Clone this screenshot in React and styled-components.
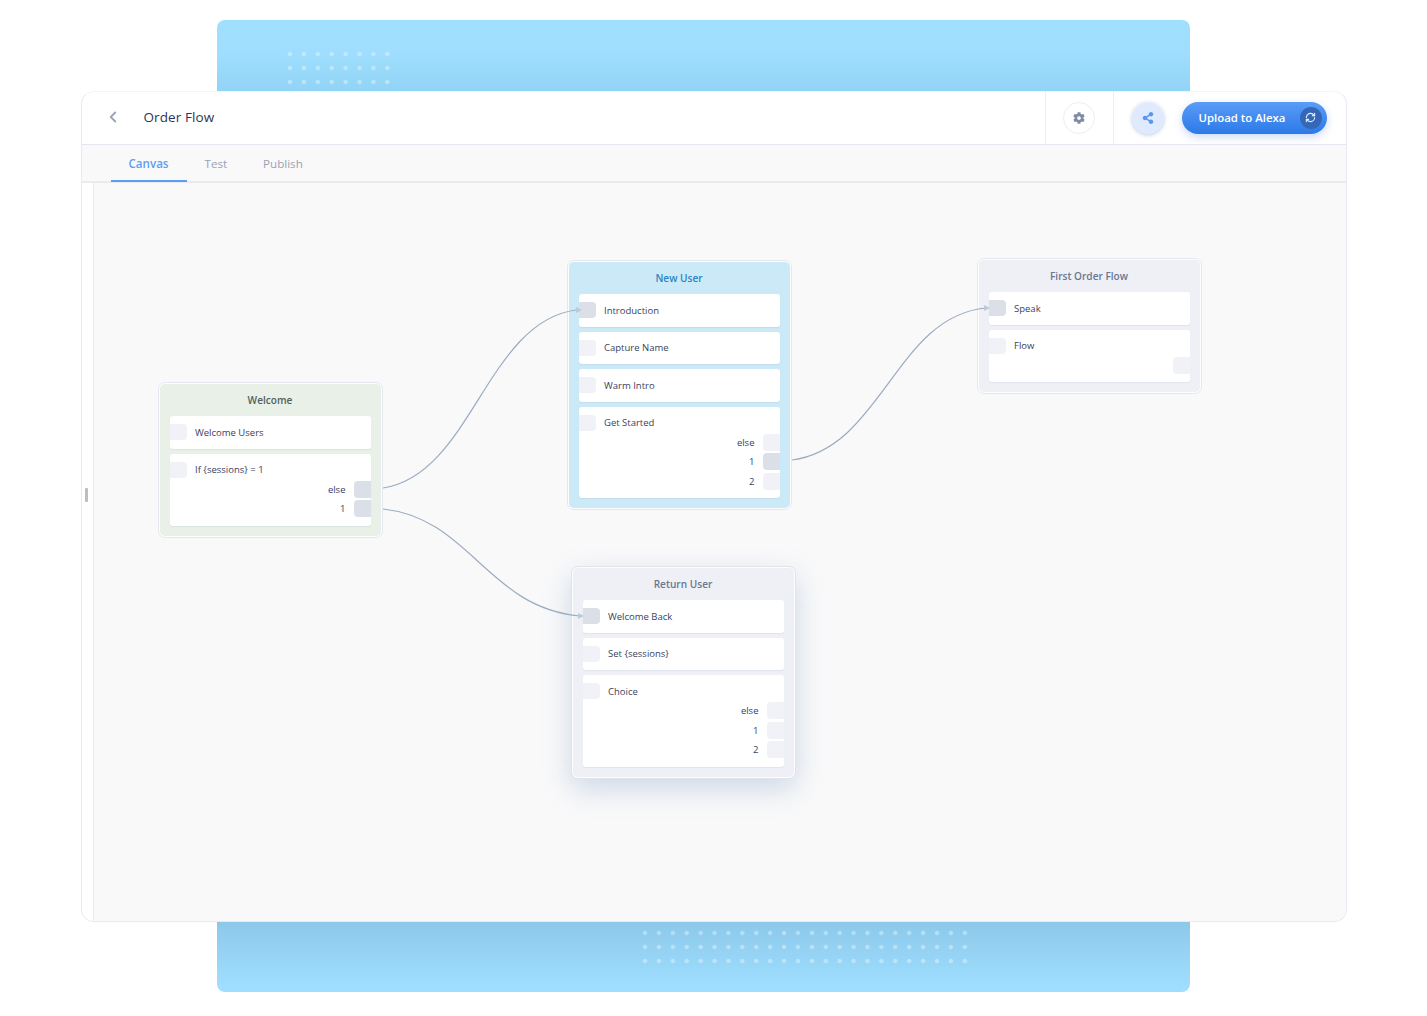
import React from 'react';
import styled, { createGlobalStyle } from 'styled-components';
import { ChevronLeft, RefreshCw } from 'lucide-react';
import { FaCog, FaShareAlt } from 'react-icons/fa';

const CANVAS_X = 94;
const CANVAS_Y = 183;

const GlobalStyle = createGlobalStyle`
  html, body { margin: 0; padding: 0; background: #fff; }
  body { font-family: "Open Sans", "Noto Sans", sans-serif; }
  * { box-sizing: border-box; }
`;

const Page = styled.div`
  width: 1427px;
  height: 1016px;
  padding-top: 20px;
  display: flex;
  flex-direction: column;
  align-items: center;
  overflow: hidden;
`;

const Banner = styled.div`
  width: 973px;
  height: ${p => p.$h}px;
  flex: none;
  margin-right: 20px;
  background: ${p => p.$bottom
    ? 'linear-gradient(180deg, #8cc8ea 0%, #9fdefe 90%)'
    : 'linear-gradient(180deg, #a0e0ff 0%, #9fdefe 45%, #92d4f6 100%)'};
  border-radius: ${p => p.$bottom ? '0 0 8px 8px' : '8px 8px 0 0'};
  padding: ${p => p.$pad};
`;

const DotField = styled.div`
  width: ${p => p.$cols * 13.92}px;
  height: 42px;
  background-image: radial-gradient(circle at 7px 7px, rgba(255,255,255,.36) 1.6px, transparent 2.7px);
  background-size: 13.92px 14px;
`;

const Window = styled.div`
  width: 1266px;
  height: 831px;
  flex: none;
  display: flex;
  flex-direction: column;
  background: #fff;
  border: 1px solid #e7e9f3;
  border-top-color: #f3f4f7;
  border-radius: 13px;
  overflow: hidden;
`;

const Header = styled.header`
  height: 53px;
  flex: none;
  display: flex;
  align-items: center;
  border-bottom: 1px solid #e6e8ef;
`;

const BackBtn = styled.div`
  width: 62px;
  padding: 0 0 2px 22px;
  display: flex;
  color: #9aa4b4;
`;

const Title = styled.div`
  flex: 1;
  padding-bottom: 2px;
  font-size: 13.5px;
  color: #2d3553;
  letter-spacing: .1px;
`;

const HeaderCell = styled.div`
  height: 100%;
  width: 68px;
  display: flex;
  align-items: center;
  justify-content: center;
  border-left: 1px solid #eceef3;
`;

const RoundBtn = styled.div`
  width: 32px;
  height: 32px;
  border-radius: 50%;
  display: flex;
  align-items: center;
  justify-content: center;
  font-size: 12px;
  background: ${p => p.$active ? '#dfeaff' : '#fff'};
  color: ${p => p.$active ? '#5b96ee' : '#7f8da3'};
  border: 1px solid ${p => p.$active ? '#e6edfb' : '#eceef3'};
  box-shadow: ${p => p.$active ? '0 1px 4px rgba(90,130,190,.4)' : 'none'};
`;

const ShareCell = styled.div`
  height: 100%;
  width: 233px;
  padding: 0 19px 0 18px;
  display: flex;
  align-items: center;
  gap: 18px;
  border-left: 1px solid #eceef3;
`;

const UploadBtn = styled.div`
  width: 145px;
  height: 32px;
  flex: none;
  border-radius: 16px;
  padding: 0 5px 1px 17px;
  display: flex;
  align-items: center;
  justify-content: space-between;
  background: linear-gradient(180deg, #5a9cf8 0%, #2c79e8 100%);
  box-shadow: 0 3px 8px rgba(60,120,220,.28);
  color: #fff;
  font-size: 11.4px;
  font-weight: 600;
`;

const UploadIcon = styled.span`
  width: 22px;
  height: 22px;
  border-radius: 50%;
  background: #3468b6;
  display: flex;
  align-items: center;
  justify-content: center;
  color: #e6eefa;
`;

const Tabs = styled.nav`
  height: 38px;
  flex: none;
  padding-left: 29px;
  display: flex;
  background: #f9f9fa;
  border-bottom: 2px solid #e9ebf0;
`;

const Tab = styled.div`
  height: 37px;
  padding: 1px 18px 0;
  display: flex;
  align-items: center;
  font-size: 11.6px;
  font-weight: ${p => p.$active ? 600 : 500};
  color: ${p => p.$active ? '#5f9df5' : '#9aa1b4'};
  border-bottom: 2px solid ${p => p.$active ? '#5f9df5' : 'transparent'};
`;

const Body = styled.div`
  flex: 1;
  display: flex;
  min-height: 0;
`;

const Rail = styled.aside`
  width: 12px;
  flex: none;
  padding: 305px 0 0 3px;
  background: #fff;
  border-right: 1px solid #e8eaf0;
`;

const RailHandle = styled.div`
  width: 3px;
  height: 14px;
  background: #b9bec7;
  border-radius: 1px;
`;

const Canvas = styled.main`
  flex: 1;
  position: relative;
  background: #f9f9fa;
`;

const Wires = styled.svg`
  position: absolute;
  left: 0;
  top: 0;
  width: 100%;
  height: 100%;
  overflow: visible;
  pointer-events: none;
`;

const Node = styled.section`
  position: absolute;
  left: ${p => p.$x - CANVAS_X}px;
  top: ${p => p.$y - CANVAS_Y}px;
  width: 225px;
  padding: 1px;
  background: #fdfdfe;
  border: 1px solid ${p => p.$lift ? '#dfe3ea' : '#e5e8f0'};
  border-radius: 7px;
  box-shadow: ${p => p.$lift ? '0 10px 28px rgba(115,150,190,.32)' : 'none'};
`;

const NodeInner = styled.div`
  padding: 0 10px 10px;
  border-radius: 5px;
  background: ${p => p.$bg};
  display: flex;
  flex-direction: column;
  gap: 5px;
`;

const NodeTitle = styled.div`
  height: 32px;
  margin-bottom: -5px;
  display: flex;
  align-items: center;
  justify-content: center;
  font-size: 10.1px;
  font-weight: 600;
  color: ${p => p.$color};
`;

const Row = styled.div`
  padding: 8.25px 0;
  background: #fff;
  border-radius: 3px;
  box-shadow: 0 1px 1px rgba(130,150,180,.14);
`;

const RowHead = styled.div`
  height: 16px;
  display: flex;
  align-items: center;
  gap: 8.5px;
  font-size: 9.5px;
  color: #3a4260;
`;

const Port = styled.span`
  width: 17px;
  height: ${p => p.$h || 16}px;
  flex: none;
  background: ${p => p.$on ? '#dadfe8' : '#f0f2f7'};
  border-radius: ${p => p.$side === 'right' ? '4px 0 0 4px' : '0 4px 4px 0'};
`;

const Outputs = styled.div`
  margin-top: 3px;
  display: flex;
  flex-direction: column;
  gap: 2.5px;
`;

const Output = styled.div`
  height: 17px;
  display: flex;
  align-items: center;
  justify-content: flex-end;
  gap: 8px;
  font-size: 9.5px;
  color: #3a4260;
`;

const WIRE_COLOR = '#9cadc2';
const ARROW_COLOR = '#bccad8';

// page coordinates, shifted onto the canvas
const wires = [
  { d: 'M383 488 C472 474 486 322 576 310', tip: [576, 310] },
  { d: 'M383 509 C470 518 488 608 580 616', tip: [578, 616] },
  { d: 'M792 460 C882 448 896 316 986 308', tip: [984, 308] },
];

const nodes = [
  {
    title: 'Welcome', x: 158, y: 382, bg: '#e9f0e8', color: '#545f58',
    rows: [
      { label: 'Welcome Users' },
      { label: 'If {sessions} = 1', outputs: [{ label: 'else', on: true }, { label: '1', on: true }] },
    ],
  },
  {
    title: 'New User', x: 567, y: 260, bg: '#cce9f7', color: '#2c84c4',
    rows: [
      { label: 'Introduction', on: true },
      { label: 'Capture Name' },
      { label: 'Warm Intro' },
      { label: 'Get Started', outputs: [{ label: 'else' }, { label: '1', on: true }, { label: '2' }] },
    ],
  },
  {
    title: 'First Order Flow', x: 977, y: 258, bg: '#eef0f6', color: '#6b7690',
    rows: [
      { label: 'Speak', on: true },
      { label: 'Flow', outputs: [{ label: '' }] },
    ],
  },
  {
    title: 'Return User', x: 571, y: 566, bg: '#eef0f6', color: '#6b7690', lift: true,
    rows: [
      { label: 'Welcome Back', on: true },
      { label: 'Set {sessions}' },
      { label: 'Choice', outputs: [{ label: 'else' }, { label: '1' }, { label: '2' }] },
    ],
  },
];

function FlowNode({ node }) {
  return (
    <Node $x={node.x} $y={node.y} $lift={node.lift}>
      <NodeInner $bg={node.bg}>
        <NodeTitle $color={node.color}>{node.title}</NodeTitle>
        {node.rows.map(row => (
          <Row key={row.label}>
            <RowHead>
              <Port $on={row.on} />
              {row.label}
            </RowHead>
            {row.outputs && (
              <Outputs>
                {row.outputs.map(out => (
                  <Output key={out.label}>
                    {out.label}
                    <Port $side="right" $h={17} $on={out.on} />
                  </Output>
                ))}
              </Outputs>
            )}
          </Row>
        ))}
      </NodeInner>
    </Node>
  );
}

export default function App() {
  return (
    <Page>
      <GlobalStyle />
      <Banner $h={71} $pad="27px 0 0 66px">
        <DotField $cols={8} />
      </Banner>
      <Window>
        <Header>
          <BackBtn><ChevronLeft size={18} strokeWidth={2.4} /></BackBtn>
          <Title>Order Flow</Title>
          <HeaderCell>
            <RoundBtn><FaCog /></RoundBtn>
          </HeaderCell>
          <ShareCell>
            <RoundBtn $active><FaShareAlt /></RoundBtn>
            <UploadBtn>
              Upload to Alexa
              <UploadIcon><RefreshCw size={11} strokeWidth={2.4} /></UploadIcon>
            </UploadBtn>
          </ShareCell>
        </Header>
        <Tabs>
          <Tab $active>Canvas</Tab>
          <Tab>Test</Tab>
          <Tab>Publish</Tab>
        </Tabs>
        <Body>
          <Rail><RailHandle /></Rail>
          <Canvas>
            {nodes.map(node => <FlowNode key={node.title} node={node} />)}
            <Wires>
              <g transform={`translate(${-CANVAS_X} ${-CANVAS_Y})`}>
                {wires.map(w => (
                  <g key={w.d}>
                    <path d={w.d} fill="none" stroke={WIRE_COLOR} strokeWidth="1.25" />
                    <path
                      d={`M${w.tip[0]} ${w.tip[1] - 3} l6 3 l-6 3 z`}
                      fill={ARROW_COLOR}
                    />
                  </g>
                ))}
              </g>
            </Wires>
          </Canvas>
        </Body>
      </Window>
      <Banner $bottom $h={70} $pad="4px 0 0 421px">
        <DotField $cols={24} />
      </Banner>
    </Page>
  );
}
